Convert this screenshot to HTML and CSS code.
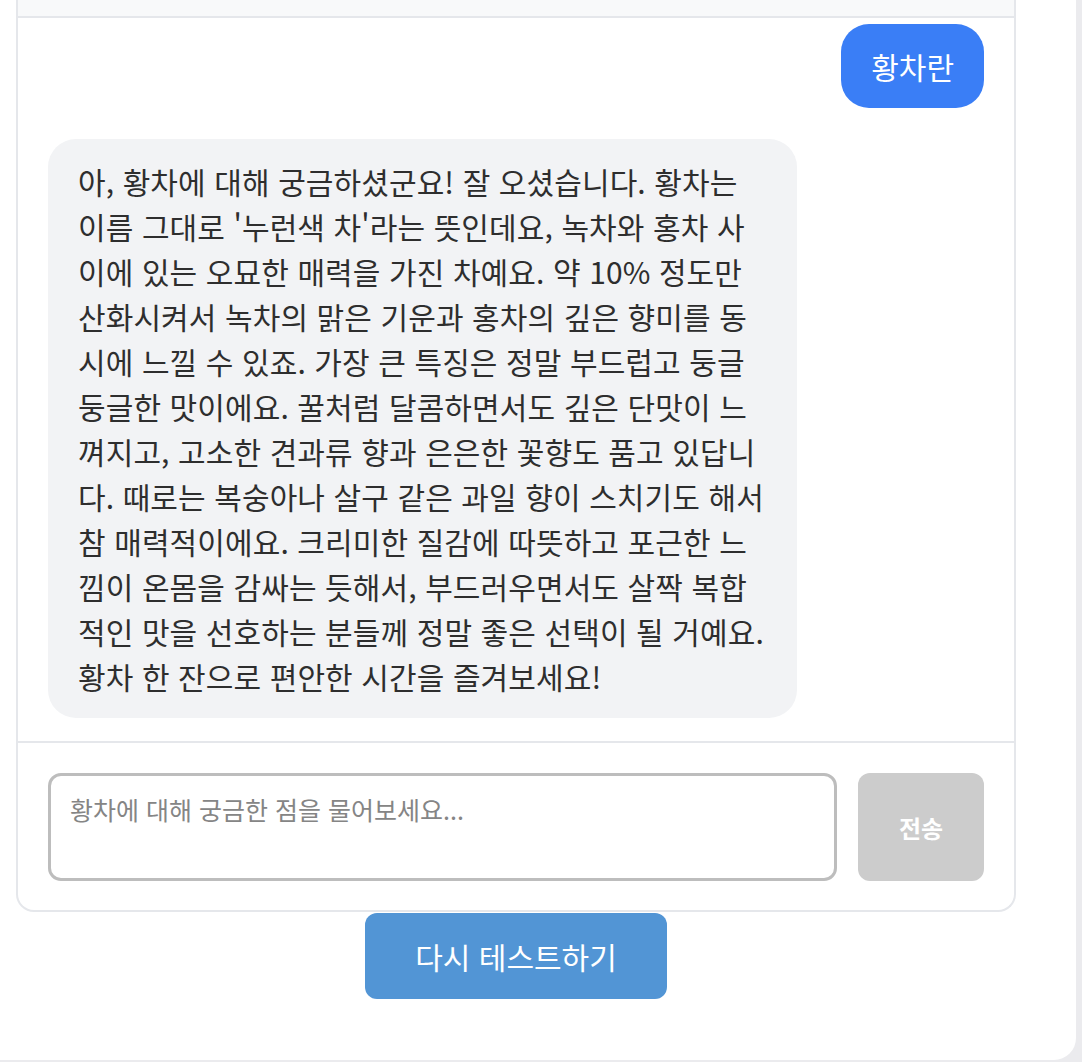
FILE: index.html
```html
<!DOCTYPE html>
<html lang="ko">
<head>
  <meta charset="UTF-8">
  <meta name="viewport" content="width=device-width, initial-scale=1.0">
  <title>황차 상담</title>
  <link rel="stylesheet" href="styles.css">
</head>
<body>
  <div class="page">
    <div class="chat">
      <div class="chat-header"></div>

      <div class="messages">
        <div class="msg msg-user">황차란</div>
        <div class="msg msg-bot">아, 황차에 대해 궁금하셨군요! 잘 오셨습니다. 황차는<br>이름 그대로 '누런색 차'라는 뜻인데요, 녹차와 홍차 사<br>이에 있는 오묘한 매력을 가진 차예요. 약 10% 정도만<br>산화시켜서 녹차의 맑은 기운과 홍차의 깊은 향미를 동<br>시에 느낄 수 있죠. 가장 큰 특징은 정말 부드럽고 둥글<br>둥글한 맛이에요. 꿀처럼 달콤하면서도 깊은 단맛이 느<br>껴지고, 고소한 견과류 향과 은은한 꽃향도 품고 있답니<br>다. 때로는 복숭아나 살구 같은 과일 향이 스치기도 해서<br>참 매력적이에요. 크리미한 질감에 따뜻하고 포근한 느<br>낌이 온몸을 감싸는 듯해서, 부드러우면서도 살짝 복합<br>적인 맛을 선호하는 분들께 정말 좋은 선택이 될 거예요.<br>황차 한 잔으로 편안한 시간을 즐겨보세요!</div>
      </div>

      <div class="composer">
        <textarea class="composer-input" placeholder="황차에 대해 궁금한 점을 물어보세요..."></textarea>
        <button class="composer-send" disabled>전송</button>
      </div>
    </div>

    <div class="actions">
      <button class="btn-retry">다시 테스트하기</button>
    </div>
  </div>
</body>
</html>
```

FILE: styles.css
```css
* {
  margin: 0;
  padding: 0;
  box-sizing: border-box;
}
body {
  background-color: #ebebee;
  font-family: "Noto Sans CJK KR", "Noto Sans", sans-serif;
  color: #333;
}

.page {
  width: 1076px;
  min-height: 1060px;
  padding: 0 60px 0 16px;
  background-color: #fff;
  border-radius: 0 0 22px 0;
}

.chat {
  width: 1000px;
  border: 2px solid #e5e7eb;
  border-top: none;
  border-radius: 0 0 18px 18px;
  background-color: #fff;
}
.chat-header {
  height: 18px;
  background-color: #f8f9fa;
  border-bottom: 2px solid #e5e7eb;
}

.messages {
  display: flex;
  flex-direction: column;
  gap: 31px;
  padding: 6px 30px 23px;
  border-bottom: 2px solid #e5e7eb;
}
.msg {
  max-width: 80%;
  padding: 19.5px 30px;
  border-radius: 28px;
  font-size: 30px;
  line-height: 45px;
}
.msg-user {
  align-self: flex-end;
  background-color: #3a7ef6;
  color: #fff;
}
.msg-bot {
  align-self: flex-start;
  width: 80%;
  white-space: nowrap;
  letter-spacing: 0.1px;
  background-color: #f2f3f5;
  color: #2e2e2e;
}

.composer {
  display: flex;
  gap: 21px;
  padding: 30px 30px 29px;
}
.composer-input {
  flex: 1;
  height: 108px;
  padding: 15px 19px;
  border: 3px solid #bdbdbd;
  border-radius: 13px;
  font-family: inherit;
  font-size: 25px;
  line-height: 37px;
  color: #333;
  resize: none;
  outline: none;
}
.composer-input::placeholder {
  color: #858585;
}
.composer-send {
  width: 126px;
  border: none;
  border-radius: 12px;
  background-color: #cccccc;
  color: #fff;
  font-family: inherit;
  font-size: 24px;
  font-weight: 700;
}

.actions {
  display: flex;
  justify-content: center;
  width: 1000px;
  padding-top: 1px;
}
.btn-retry {
  padding: 20.5px 50px;
  border: none;
  border-radius: 12px;
  background-color: #5295d5;
  color: #fff;
  font-family: inherit;
  font-size: 30px;
  line-height: 45px;
}
```
